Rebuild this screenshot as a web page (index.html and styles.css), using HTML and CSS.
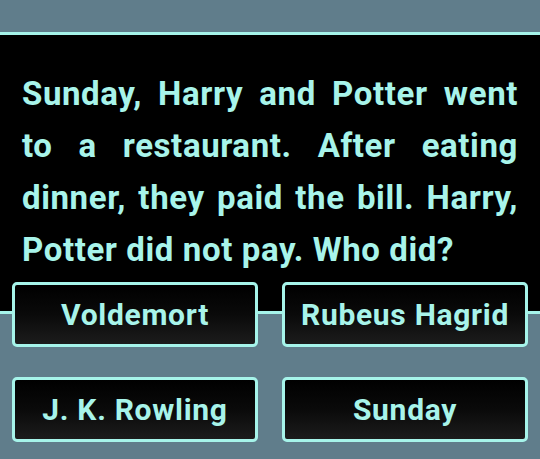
FILE: index.html
```html
<!DOCTYPE html>
<html>
<head>
<meta charset="utf-8">
<link rel="stylesheet" href="styles.css">
</head>
<body>
<div class="top"></div>
<div class="panel">
  <p class="question">Sunday, Harry and Potter went to a restaurant. After eating dinner, they paid the bill. Harry, Potter did not pay. Who did?</p>
</div>
<div class="answers">
  <button class="answer">Voldemort</button>
  <button class="answer">Rubeus Hagrid</button>
  <button class="answer">J. K. Rowling</button>
  <button class="answer">Sunday</button>
</div>
</body>
</html>
```
FILE: styles.css
```css
html, body {
  margin: 0;
  padding: 0;
}
body {
  width: 540px;
  height: 459px;
  background: #607d8b;
  font-family: Roboto, "Liberation Sans", sans-serif;
  overflow: hidden;
}
.top {
  height: 32px;
}
.panel {
  background: #000;
  border-top: 3px solid #a6f4ea;
  border-bottom: 3px solid #a6f4ea;
  padding: 33px 22px 35px 22px;
}
.question {
  margin: 0;
  color: #a8f4ea;
  font-size: 33px;
  font-weight: 700;
  letter-spacing: 0.6px;
  line-height: 52px;
  text-align: justify;
}
.answers {
  display: grid;
  grid-template-columns: 1fr 1fr;
  column-gap: 24px;
  row-gap: 30px;
  padding: 0 12px;
  margin-top: -32px;
}
.answer {
  height: 65px;
  margin: 0;
  padding: 0;
  border: 3px solid #a6f4ea;
  border-radius: 5px;
  background: linear-gradient(#000 0%, #0a0a0a 50%, #1c1c1c 100%);
  color: #a8f4ea;
  font-family: Roboto, "Liberation Sans", sans-serif;
  font-size: 30px;
  font-weight: 700;
  letter-spacing: 0.7px;
  text-align: center;
}
```
